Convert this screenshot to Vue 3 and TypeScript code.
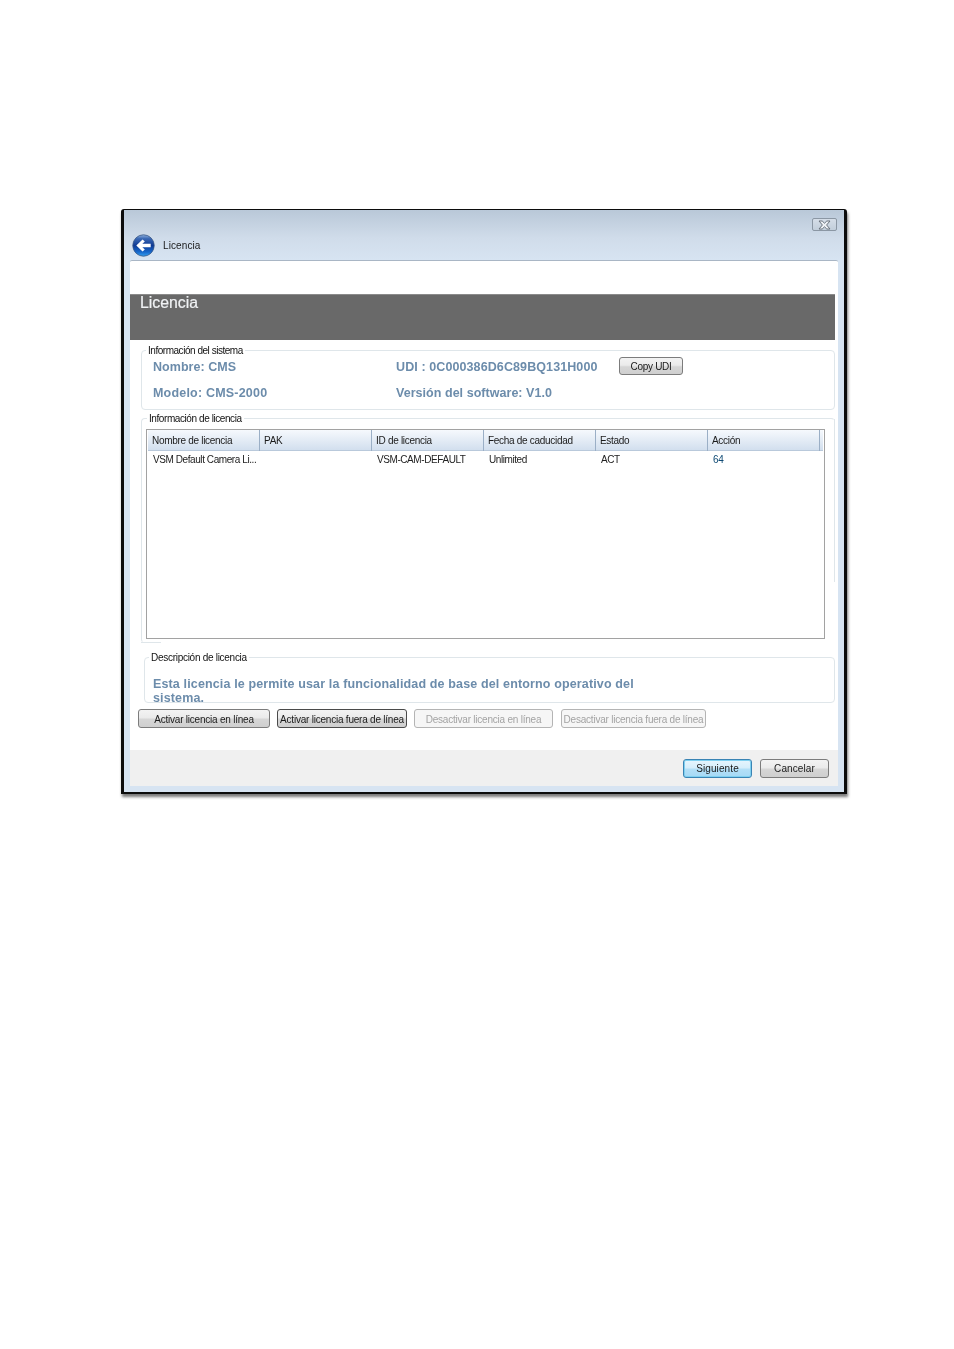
<script setup lang="ts">
interface Row { label: string; cls?: string }
const headers: string[] = ['Nombre de licencia', 'PAK', 'ID de licencia', 'Fecha de caducidad', 'Estado', 'Acción']
const cells: Row[] = [
  { label: 'VSM Default Camera Li...' },
  { label: '' },
  { label: 'VSM-CAM-DEFAULT' },
  { label: 'Unlimited' },
  { label: 'ACT' },
  { label: '64', cls: 'link' }
]
</script>

<template>
  <div class="page">
    <section class="window">
      <header class="titlebar">
        <div class="close-row">
          <button class="close" type="button" aria-label="Cerrar">
            <svg width="13" height="10" viewBox="0 0 13 10">
              <path d="M1 1 H4.2 L6.5 3.2 L8.8 1 H12 L8.6 5 L12 9 H8.8 L6.5 6.8 L4.2 9 H1 L4.4 5 Z" fill="#eef1f5" stroke="#6a737d" stroke-width="1" />
            </svg>
          </button>
        </div>
        <div class="nav-row">
          <svg class="back" width="23" height="23" viewBox="0 0 24 24">
            <defs>
              <linearGradient id="orb" x1="0" y1="0" x2="0" y2="1">
                <stop offset="0" stop-color="#8fb0dc" />
                <stop offset="0.18" stop-color="#3a68b4" />
                <stop offset="0.5" stop-color="#0f3a94" />
                <stop offset="0.8" stop-color="#1668cc" />
                <stop offset="1" stop-color="#34a0ee" />
              </linearGradient>
            </defs>
            <circle cx="12" cy="12" r="11.2" fill="url(#orb)" stroke="#3a5684" stroke-width="0.8" />
            <path d="M4.5 12 L11 5.8 L13.4 7.8 L10.8 10.2 H19.5 V13.8 H10.8 L13.4 16.2 L11 18.2 Z" fill="#fff" />
          </svg>
          <span class="nav-title">Licencia</span>
        </div>
      </header>

      <main class="content">
        <div class="band"><h1>Licencia</h1></div>

        <div class="group sys">
          <div class="legend">Información del sistema</div>
          <div class="sys-grid">
            <span class="info">Nombre: CMS</span>
            <span class="info wide">UDI : 0C000386D6C89BQ131H000</span>
            <button class="btn copy" type="button">Copy UDI</button>
            <span class="info wider">Modelo: CMS-2000</span>
            <span class="info">Versión del software: V1.0</span>
          </div>
        </div>

        <div class="group lic">
          <div class="legend">Información de licencia</div>
          <div class="table">
            <div class="thead">
              <div v-for="h in headers" :key="h" class="th">{{ h }}</div>
            </div>
            <div class="tr">
              <div v-for="(c, i) in cells" :key="i" class="td" :class="c.cls">{{ c.label }}</div>
            </div>
          </div>
        </div>

        <div class="group desc">
          <div class="legend">Descripción de licencia</div>
          <p class="info desc-text">Esta licencia le permite usar la funcionalidad de base del entorno operativo del sistema.</p>
        </div>

        <div class="actions">
          <button class="btn a1" type="button">Activar licencia en línea</button>
          <button class="btn a2 dark" type="button">Activar licencia fuera de línea</button>
          <button class="btn a3" type="button" disabled>Desactivar licencia en línea</button>
          <button class="btn a4" type="button" disabled>Desactivar licencia fuera de línea</button>
        </div>
      </main>

      <footer class="footer">
        <button class="btn primary" type="button">Siguiente</button>
        <button class="btn cancel" type="button">Cancelar</button>
      </footer>
    </section>
  </div>
</template>

<style scoped>
.page {
  padding: 209px 0 0 121px;
  height: 1140px;
  box-sizing: content-box;
  font-family: "Liberation Sans", Arial, sans-serif;
}
.window {
  width: 726px;
  height: 585px;
  box-sizing: border-box;
  border: solid #0c0c0c;
  border-width: 1px 3px 2px 3px;
  border-radius: 3px 3px 0 0;
  padding: 0 6px 6px;
  background: linear-gradient(#b9c8d8 0, #d0dcea 28px, #d7e4f2 50px);
  box-shadow: 1px 3px 3px #7a7a7a;
  display: flex;
  flex-direction: column;
  filter: blur(0.3px);
}
.titlebar { height: 50px; flex: none; display: flex; flex-direction: column; }
.close-row { display: flex; justify-content: flex-end; padding: 8px 1px 0 0; height: 20px; box-sizing: border-box; }
.close {
  width: 25px;
  height: 13px;
  padding: 0;
  border: 1px solid #8b97a4;
  border-radius: 2px;
  background: linear-gradient(#d5dee8, #c2cedb);
  display: flex;
  align-items: center;
  justify-content: center;
}
.nav-row { display: flex; align-items: center; padding-top: 4px; margin-left: 2px; }
.back { flex: none; }
.nav-title { margin-left: 8px; font-size: 10px; letter-spacing: 0.1px; color: #1a1a1a; }
.content {
  height: 490px;
  flex: none;
  background: #fff;
  border-top: 1px solid #a9b6c5;
  border-radius: 2px 2px 0 0;
  box-sizing: border-box;
  padding-top: 33px;
}
.band {
  width: 705px;
  height: 46px;
  box-sizing: border-box;
  background: #696969;
  border-top: 1px solid #8b8b8b;
  padding: 0 0 0 10px;
}
.band h1 {
  margin: 0;
  font-size: 15.8px;
  line-height: 16px;
  font-weight: 400;
  color: #f0f2f4;
  -webkit-text-stroke: 0.2px #f0f2f4;
}
.group {
  position: relative;
  box-sizing: border-box;
  margin-left: 11px;
  width: 694px;
  border: 1px solid #dfe6ea;
  border-radius: 4px;
}
.legend {
  width: fit-content;
  margin: -7px 0 0 5px;
  padding: 0 2px;
  background: #fff;
  font-size: 10px;
  letter-spacing: -0.42px;
  line-height: 13px;
  color: #111;
  height: 13px;
}
.sys .legend { margin-left: 4px; letter-spacing: -0.47px; }
.sys { margin-top: 10px; height: 60px; }
.sys-grid {
  display: grid;
  grid-template-columns: 243px 223px auto;
  grid-template-rows: 26px 26px;
  align-items: center;
  justify-items: start;
  padding: 0 0 0 11px;
  margin-top: -3px;
}
.info { font-size: 12.5px; font-weight: 700; letter-spacing: 0.04px; color: #6c8cab; white-space: nowrap; }
.wide { letter-spacing: 0.1px; }
.wider { letter-spacing: 0.2px; }
.lic {
  margin-top: 8px;
  height: 225px;
  border-bottom-color: transparent;
  border-right-color: transparent;
}
.lic::after {
  content: "";
  position: absolute;
  left: -1px;
  bottom: -1px;
  width: 20px;
  border-bottom: 1px solid #dfe6ea;
}
.lic::before {
  content: "";
  position: absolute;
  right: -1px;
  top: 0;
  height: 163px;
  border-right: 1px solid #dfe6ea;
}
.table {
  margin: 4px 0 0 4px;
  width: 679px;
  height: 210px;
  box-sizing: border-box;
  border: 1px solid #a2a2a2;
  padding: 0 1px 0 1px;
}
.thead {
  display: grid;
  grid-template-columns: repeat(6, 112px) 1fr;
  height: 21px;
  background: linear-gradient(#f6f9fd, #d2dfee);
  border-bottom: 1px solid #b9c9db;
  box-sizing: border-box;
}
.th {
  box-sizing: border-box;
  border-right: 1px solid #9bafc6;
  padding-left: 4px;
  font-size: 10px;
  letter-spacing: -0.3px;
  line-height: 21px;
  color: #1b1b1b;
  white-space: nowrap;
}
.tr { display: grid; grid-template-columns: repeat(6, 112px); height: 16px; }
.td { padding: 1px 0 0 5px; font-size: 10px; letter-spacing: -0.42px; line-height: 16px; color: #222; white-space: nowrap; }
.td.link { color: #0f4a74; }
.desc {
  margin-top: 14px;
  margin-left: 14px;
  width: 691px;
  height: 46px;
}
.desc .legend { margin-left: 4px; letter-spacing: -0.28px; }
.desc-text {
  margin: 0;
  padding: 13px 0 0 8px;
  width: 500px;
  white-space: normal;
  font-size: 12.5px;
  letter-spacing: 0.14px;
  line-height: 14px;
  height: 32px;
  box-sizing: border-box;
}
.btn {
  box-sizing: border-box;
  padding: 0;
  border: 1px solid #7c7c7c;
  border-radius: 3px;
  background: linear-gradient(#f3f3f3 0, #ebebeb 45%, #d6d6d6 55%, #cfcfcf 100%);
  font-family: "Liberation Sans", Arial, sans-serif;
  font-size: 10px;
  letter-spacing: -0.22px;
  color: #1a1a1a;
  white-space: nowrap;
}
.btn:disabled { background: #f6f6f6; border-color: #b4b4b4; color: #a3a3a3; }
.copy { width: 64px; height: 18px; margin: -2px 0 0 0; letter-spacing: -0.3px; }
.actions { display: flex; gap: 7px; margin: 6px 0 0 8px; height: 19px; }
.actions .btn { padding-top: 1px; }
.a1 { width: 132px; }
.a2 { width: 130px; }
.a3 { width: 139px; }
.a4 { width: 145px; margin-left: 1px; }
.dark { border-color: #4a4a4a; }
.footer {
  flex: 1;
  background: #f0f0f0;
  display: flex;
  justify-content: flex-end;
  align-items: flex-start;
  gap: 8px;
  padding: 9px 9px 0 0;
}
.footer .btn { width: 69px; height: 19px; letter-spacing: 0.1px; }
.primary {
  border-color: #3a84b4 !important;
  background: linear-gradient(#e6f5fd 0, #d6eefb 45%, #b2dff7 55%, #a6daf6 100%) !important;
  box-shadow: inset 0 0 0 1px #7fd0f0;
}
</style>

<style>
html, body { background: #fff; margin: 0; }
</style>
